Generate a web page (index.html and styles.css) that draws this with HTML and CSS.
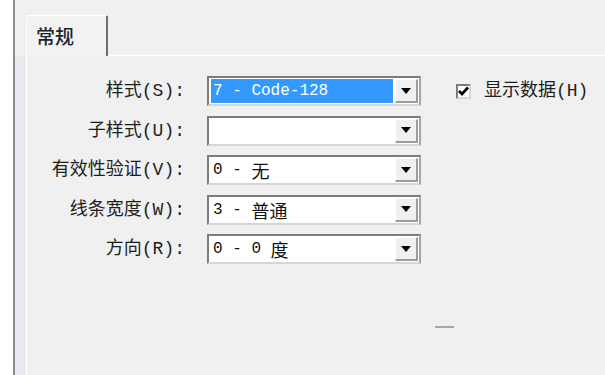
FILE: index.html
```html
<!DOCTYPE html>
<html lang="zh-CN">
<head>
<meta charset="utf-8">
<title>条码属性</title>
<link rel="stylesheet" href="styles.css">
</head>
<body>
<div class="gutter"></div>
<div class="frame">
  <div class="tabbar">
    <div class="tab">常规</div>
    <div class="tabfill"></div>
  </div>
  <div class="panel">
    <div class="form">
      <div class="label">样式(S):</div>
      <div class="combo"><div class="val sel">7 - Code-128</div><div class="btn"><span class="tri"></span></div></div>
      <label class="check"><span class="box"><svg width="11" height="10" viewBox="0 0 11 10"><polyline points="1,5 4,8 10,1.5" fill="none" stroke="#000" stroke-width="2.6"/></svg></span><span class="ctext">显示数据(H)</span></label>

      <div class="label">子样式(U):</div>
      <div class="combo"><div class="val"></div><div class="btn"><span class="tri"></span></div></div>
      <div></div>

      <div class="label">有效性验证(V):</div>
      <div class="combo"><div class="val">0 - <span class="cj">无</span></div><div class="btn"><span class="tri"></span></div></div>
      <div></div>

      <div class="label">线条宽度(W):</div>
      <div class="combo"><div class="val">3 - <span class="cj">普通</span></div><div class="btn"><span class="tri"></span></div></div>
      <div></div>

      <div class="label">方向(R):</div>
      <div class="combo"><div class="val">0 - 0 <span class="cj">度</span></div><div class="btn"><span class="tri"></span></div></div>
      <div></div>
    </div>
    <div class="dash"></div>
  </div>
</div>
</body>
</html>
```

FILE: styles.css
```css
html, body {
  margin: 0;
  padding: 0;
  width: 605px;
  height: 375px;
  overflow: hidden;
}
body {
  display: flex;
  background: #ffffff;
  font-family: "Liberation Mono", "Noto Sans CJK SC", monospace;
  color: #1c1c1c;
}
.gutter {
  width: 13px;
  flex: none;
}
.frame {
  flex: 1;
  height: 375px;
  box-sizing: border-box;
  border-left: 2px solid #8e8e8e;
  background: #e9e9ef;
  display: flex;
  flex-direction: column;
}
.tabbar {
  height: 56px;
  flex: none;
  display: flex;
  align-items: flex-end;
  padding-left: 11px;
  background: #f0f0f0;
}
.tab {
  box-sizing: border-box;
  width: 82px;
  height: 41px;
  border-top: 1px solid #ffffff;
  border-left: 1px solid #ffffff;
  border-right: 2px solid #6f6f6f;
  border-top-left-radius: 2px;
  border-top-right-radius: 2px;
  padding-left: 9px;
  padding-bottom: 1px;
  display: flex;
  align-items: center;
  font-family: "Noto Sans CJK SC", sans-serif;
  font-size: 19px;
  font-weight: 500;
  color: #1a2530;
  background: #f2f2f2;
}
.tabfill {
  flex: 1;
  height: 1px;
  background: #ffffff;
}
.panel {
  flex: 1;
  margin-left: 11px;
  border-left: 1px solid #ffffff;
  background: #f0f0f0;
  padding-top: 20px;
}
.form {
  display: grid;
  grid-template-columns: 158px 214px auto;
  grid-auto-rows: 30px;
  column-gap: 22px;
  row-gap: 9.5px;
}
.label {
  align-self: center;
  text-align: right;
  white-space: nowrap;
  font-size: 18px;
  line-height: 22px;
  color: #1e1e1e;
}
.combo {
  box-sizing: border-box;
  display: flex;
  gap: 2px;
  padding: 1px;
  border: 2px solid;
  border-color: #7c7c7c #a4a4a4 #d6d6d6 #7c7c7c;
  background: #ffffff;
}
.val {
  flex: 1;
  display: flex;
  align-items: center;
  padding-left: 3px;
  font-size: 16px;
  color: #111111;
  white-space: pre;
}
.val.sel {
  background: #3399ff;
  color: #ffffff;
  margin-left: 1px;
  padding-left: 2px;
}
.cj {
  font-family: "Noto Sans CJK SC", sans-serif;
  font-size: 18px;
}
.btn {
  box-sizing: border-box;
  width: 23px;
  display: flex;
  align-items: center;
  justify-content: center;
  background: #f0f0f0;
  border-top: 1px solid #ffffff;
  border-left: 1px solid #ffffff;
  border-right: 2px solid #9c9c9c;
  border-bottom: 2px solid #9c9c9c;
}
.tri {
  width: 0;
  height: 0;
  border-left: 5px solid transparent;
  border-right: 5px solid transparent;
  border-top: 6px solid #000000;
}
.check {
  align-self: center;
  display: flex;
  align-items: center;
  gap: 13px;
  margin-left: 13px;
  white-space: nowrap;
}
.box {
  box-sizing: border-box;
  width: 15px;
  height: 15px;
  border: 2px solid;
  border-color: #7c7c7c #d8d8d8 #d8d8d8 #7c7c7c;
  background: #ffffff;
  display: flex;
  align-items: center;
  justify-content: center;
}
.ctext {
  font-size: 18px;
  line-height: 22px;
  color: #1e1e1e;
}
.dash {
  width: 19px;
  height: 2px;
  margin-top: 62px;
  margin-left: 408px;
  background: #a8a8a8;
}
```
